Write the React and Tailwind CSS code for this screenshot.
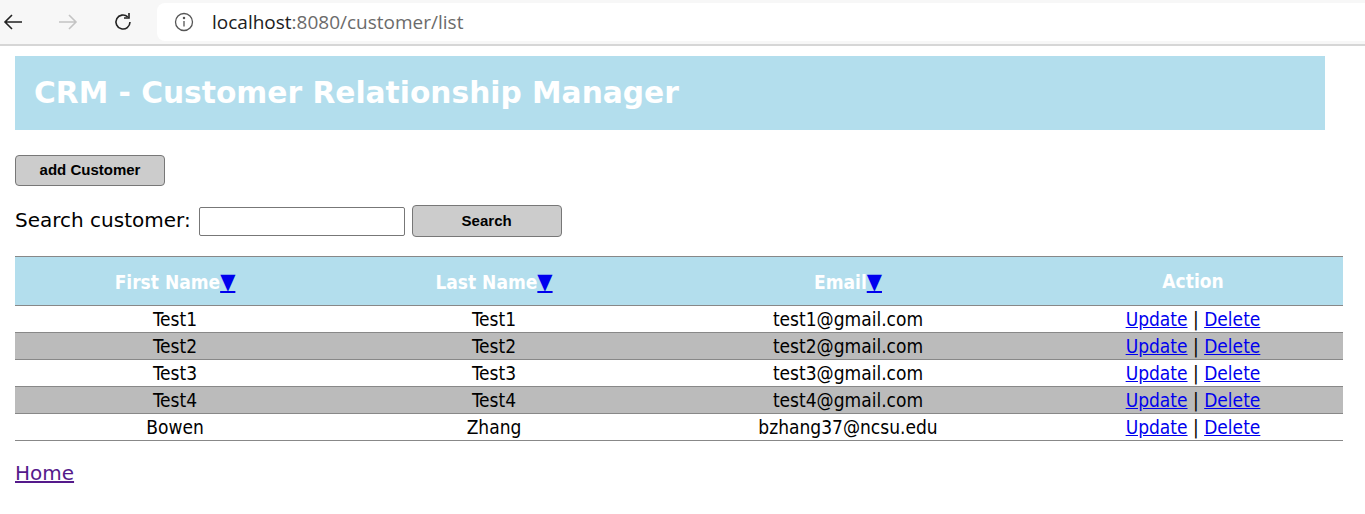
import React from "react";

const customers = [
  { first: "Test1", last: "Test1", email: "test1@gmail.com" },
  { first: "Test2", last: "Test2", email: "test2@gmail.com" },
  { first: "Test3", last: "Test3", email: "test3@gmail.com" },
  { first: "Test4", last: "Test4", email: "test4@gmail.com" },
  { first: "Bowen", last: "Zhang", email: "bzhang37@ncsu.edu" },
];

const BrowserBar = () => (
  <div className="h-[46px] bg-[#f7f7f7] border-b-2 border-[#d6d6d6] flex items-center">
    <div className="w-[157px] flex items-center pl-[2px] gap-[33px]">
      {/* back */}
      <svg width="22" height="22" viewBox="0 0 22 22" fill="none" stroke="#222" strokeWidth="1.6">
        <path d="M20 11H3M10 4l-7 7 7 7" />
      </svg>
      {/* forward */}
      <svg width="22" height="22" viewBox="0 0 22 22" fill="none" stroke="#c4c4c4" strokeWidth="1.6">
        <path d="M2 11h17M12 4l7 7-7 7" />
      </svg>
      {/* reload */}
      <svg width="22" height="22" viewBox="0 0 22 22" fill="none" stroke="#222" strokeWidth="1.6">
        <path d="M18 11a7 7 0 1 1-2.3-5.2" />
        <path d="M17 2v5h-5" />
      </svg>
    </div>
    <div className="flex-1 h-[38px] bg-white rounded-l-[8px] flex items-center pl-[17px] gap-[18px] font-['Open_Sans',sans-serif] text-[19px]">
      <svg width="20" height="20" viewBox="0 0 20 20" fill="none" stroke="#555" strokeWidth="1.3">
        <circle cx="10" cy="10" r="8.5" />
        <path d="M10 9v5.5" />
        <circle cx="10" cy="6" r="0.6" fill="#555" />
      </svg>
      <span className="text-[#202020]">
        localhost<span className="text-[#6b6b6b]">:8080/customer/list</span>
      </span>
    </div>
  </div>
);

const SortLink = () => (
  <a href="#" className="text-[#0000ee] underline text-[22px]">
    ▼
  </a>
);

export default function App() {
  return (
    <div className="bg-white min-h-[514px] font-['DejaVu_Sans',sans-serif]">
      <BrowserBar />

      <div className="pl-[15px] pr-[22px] pt-[10px]">
        <div className="w-[1310px] h-[74px] bg-[#b3deed] flex items-center pl-[19px]">
          <h2 className="text-white font-bold text-[29.7px] font-['DejaVu_Sans',sans-serif]">
            CRM - Customer Relationship Manager
          </h2>
        </div>

        <button className="mt-[25px] w-[150px] h-[31px] bg-[#cccccc] border border-[#777] rounded-[4px] text-[15px] font-bold font-['Liberation_Sans',Arial,sans-serif] block">
          add Customer
        </button>

        <div className="mt-[19px] flex items-center h-[32px] text-[20px] font-['DejaVu_Sans',sans-serif]">
          <span className="-mt-[2px]">Search customer:</span>
          <input type="text" className="ml-[8px] w-[206px] h-[29px] border border-[#777] rounded-[2px] bg-white" />
          <button className="ml-[7px] w-[150px] h-[32px] bg-[#cccccc] border border-[#777] rounded-[4px] text-[15px] font-bold font-['Liberation_Sans',Arial,sans-serif]">
            Search
          </button>
        </div>

        <table className="mt-[19px] w-[1328px] border-collapse text-[19px] font-['DejaVu_Sans_Condensed','DejaVu_Sans',sans-serif]">
          <thead>
            <tr className="bg-[#b3deed] border-t border-b border-[#888] h-[49px]">
              <th className="w-[320px] text-white font-bold">
                First Name<SortLink />
              </th>
              <th className="w-[318px] text-white font-bold">
                Last Name<SortLink />
              </th>
              <th className="w-[390px] text-white font-bold">
                Email<SortLink />
              </th>
              <th className="w-[300px] text-white font-bold">Action</th>
            </tr>
          </thead>
          <tbody>
            {customers.map((c, i) => (
              <tr
                key={c.email}
                className={`h-[27px] border-b border-[#888] leading-[26px] ${i % 2 === 1 ? "bg-[#bbbbbb]" : "bg-white"}`}
              >
                <td className="text-center">{c.first}</td>
                <td className="text-center">{c.last}</td>
                <td className="text-center">{c.email}</td>
                <td className="text-center">
                  <a href="#" className="text-[#0000ee] underline">Update</a>
                  {" | "}
                  <a href="#" className="text-[#0000ee] underline">Delete</a>
                </td>
              </tr>
            ))}
          </tbody>
        </table>

        <div className="mt-[17px] text-[20px] font-['DejaVu_Sans',sans-serif]">
          <a href="#" className="text-[#551a8b] underline">Home</a>
        </div>
      </div>
    </div>
  );
}
